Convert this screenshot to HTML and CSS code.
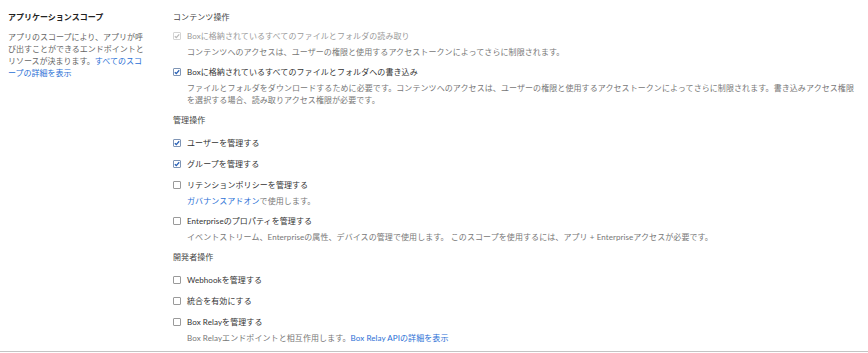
FILE: index.html
```html
<!DOCTYPE html>
<html lang="ja">
<head>
<meta charset="utf-8">
<title>アプリケーションスコープ</title>
<link rel="stylesheet" href="styles.css">
</head>
<body>
<div class="page">
  <div class="aside">
    <div class="aside-title">アプリケーションスコープ</div>
    <div class="aside-text">アプリのスコープにより、アプリが呼び出すことができるエンドポイントとリソースが決まります。<a class="link" href="#">すべてのスコープの詳細を表示</a></div>
  </div>
  <div class="main">
    <div class="section section-first">
      <div class="section-title">コンテンツ操作</div>
      <div class="scope">
        <div class="scope-line disabled">
          <span class="cb cb-disabled"><svg viewBox="0 0 8 8" width="8" height="8"><path d="M1.8 4.2 L3.3 5.6 L6.2 2.3" fill="none" stroke="#b9b9b9" stroke-width="1.2"/></svg></span>
          <span class="label">Boxに格納されているすべてのファイルとフォルダの読み取り</span>
        </div>
        <div class="desc">コンテンツへのアクセスは、ユーザーの権限と使用するアクセストークンによってさらに制限されます。</div>
      </div>
      <div class="scope">
        <div class="scope-line">
          <span class="cb cb-checked"><svg viewBox="0 0 8 8" width="8" height="8"><path d="M1.8 4.2 L3.3 5.6 L6.2 2.3" fill="none" stroke="#2a62b8" stroke-width="1.3"/></svg></span>
          <span class="label">Boxに格納されているすべてのファイルとフォルダへの書き込み</span>
        </div>
        <div class="desc">ファイルとフォルダをダウンロードするために必要です。コンテンツへのアクセスは、ユーザーの権限と使用するアクセストークンによってさらに制限されます。書き込みアクセス権限<br>を選択する場合、読み取りアクセス権限が必要です。</div>
      </div>
    </div>
    <div class="section">
      <div class="section-title">管理操作</div>
      <div class="scope">
        <div class="scope-line">
          <span class="cb cb-checked"><svg viewBox="0 0 8 8" width="8" height="8"><path d="M1.8 4.2 L3.3 5.6 L6.2 2.3" fill="none" stroke="#2a62b8" stroke-width="1.3"/></svg></span>
          <span class="label">ユーザーを管理する</span>
        </div>
      </div>
      <div class="scope">
        <div class="scope-line">
          <span class="cb cb-checked"><svg viewBox="0 0 8 8" width="8" height="8"><path d="M1.8 4.2 L3.3 5.6 L6.2 2.3" fill="none" stroke="#2a62b8" stroke-width="1.3"/></svg></span>
          <span class="label">グループを管理する</span>
        </div>
      </div>
      <div class="scope">
        <div class="scope-line">
          <span class="cb"></span>
          <span class="label">リテンションポリシーを管理する</span>
        </div>
        <div class="desc"><a class="link" href="#">ガバナンスアドオン</a>で使用します。</div>
      </div>
      <div class="scope">
        <div class="scope-line">
          <span class="cb"></span>
          <span class="label">Enterpriseのプロパティを管理する</span>
        </div>
        <div class="desc">イベントストリーム、Enterpriseの属性、デバイスの管理で使用します。 このスコープを使用するには、アプリ + Enterpriseアクセスが必要です。</div>
      </div>
    </div>
    <div class="section">
      <div class="section-title">開発者操作</div>
      <div class="scope">
        <div class="scope-line">
          <span class="cb"></span>
          <span class="label">Webhookを管理する</span>
        </div>
      </div>
      <div class="scope">
        <div class="scope-line">
          <span class="cb"></span>
          <span class="label">統合を有効にする</span>
        </div>
      </div>
      <div class="scope">
        <div class="scope-line">
          <span class="cb"></span>
          <span class="label">Box Relayを管理する</span>
        </div>
        <div class="desc">Box Relayエンドポイントと相互作用します。<a class="link" href="#">Box Relay APIの詳細を表示</a></div>
      </div>
    </div>
  </div>
</div>
</body>
</html>
```

FILE: styles.css
```css
html, body {
  margin: 0;
  padding: 0;
  background: #ffffff;
}

body {
  font-family: Lato, "Noto Sans CJK JP", sans-serif;
  font-size: 8px;
  color: #333333;
}

.page {
  display: flex;
  gap: 25px;
  padding-left: 8px;
  border-bottom: 1px solid #c4c4c4;
  height: 352px;
  box-sizing: border-box;
}

.aside {
  width: 140px;
  flex: none;
  padding-top: 10px;
}

.aside-title {
  font-weight: bold;
  color: #222222;
  line-height: 14px;
  margin-bottom: 7px;
}

.aside-text {
  color: #666666;
  line-height: 12px;
}

.link {
  color: #2a6fd6;
  text-decoration: none;
}

.main {
  flex: 1;
  padding-top: 10px;
  letter-spacing: 0.08px;
}

.section {
  margin-bottom: 1px;
}

.section-title {
  line-height: 14px;
  margin-bottom: 9px;
  color: #444444;
}

.section-first .section-title {
  margin-bottom: 5px;
}

.scope {
  margin-bottom: 7px;
}

.scope-line {
  display: flex;
  align-items: center;
  height: 14px;
}

.cb {
  width: 8px;
  height: 8px;
  box-sizing: border-box;
  border: 1px solid #9a9a9a;
  border-radius: 1px;
  background: #ffffff;
  margin-right: 6px;
  flex: none;
  display: flex;
  align-items: center;
  justify-content: center;
  overflow: hidden;
}

.cb svg {
  display: block;
  flex: none;
}

.cb-checked {
  border-color: #7f95b5;
}

.cb-disabled {
  border-color: #d4d4d4;
}

.label {
  line-height: 14px;
  color: #333333;
}

.disabled .label {
  color: #9a9a9a;
}

.desc {
  padding-left: 14px;
  margin-top: 3px;
  line-height: 12px;
  color: #777777;
}
```
